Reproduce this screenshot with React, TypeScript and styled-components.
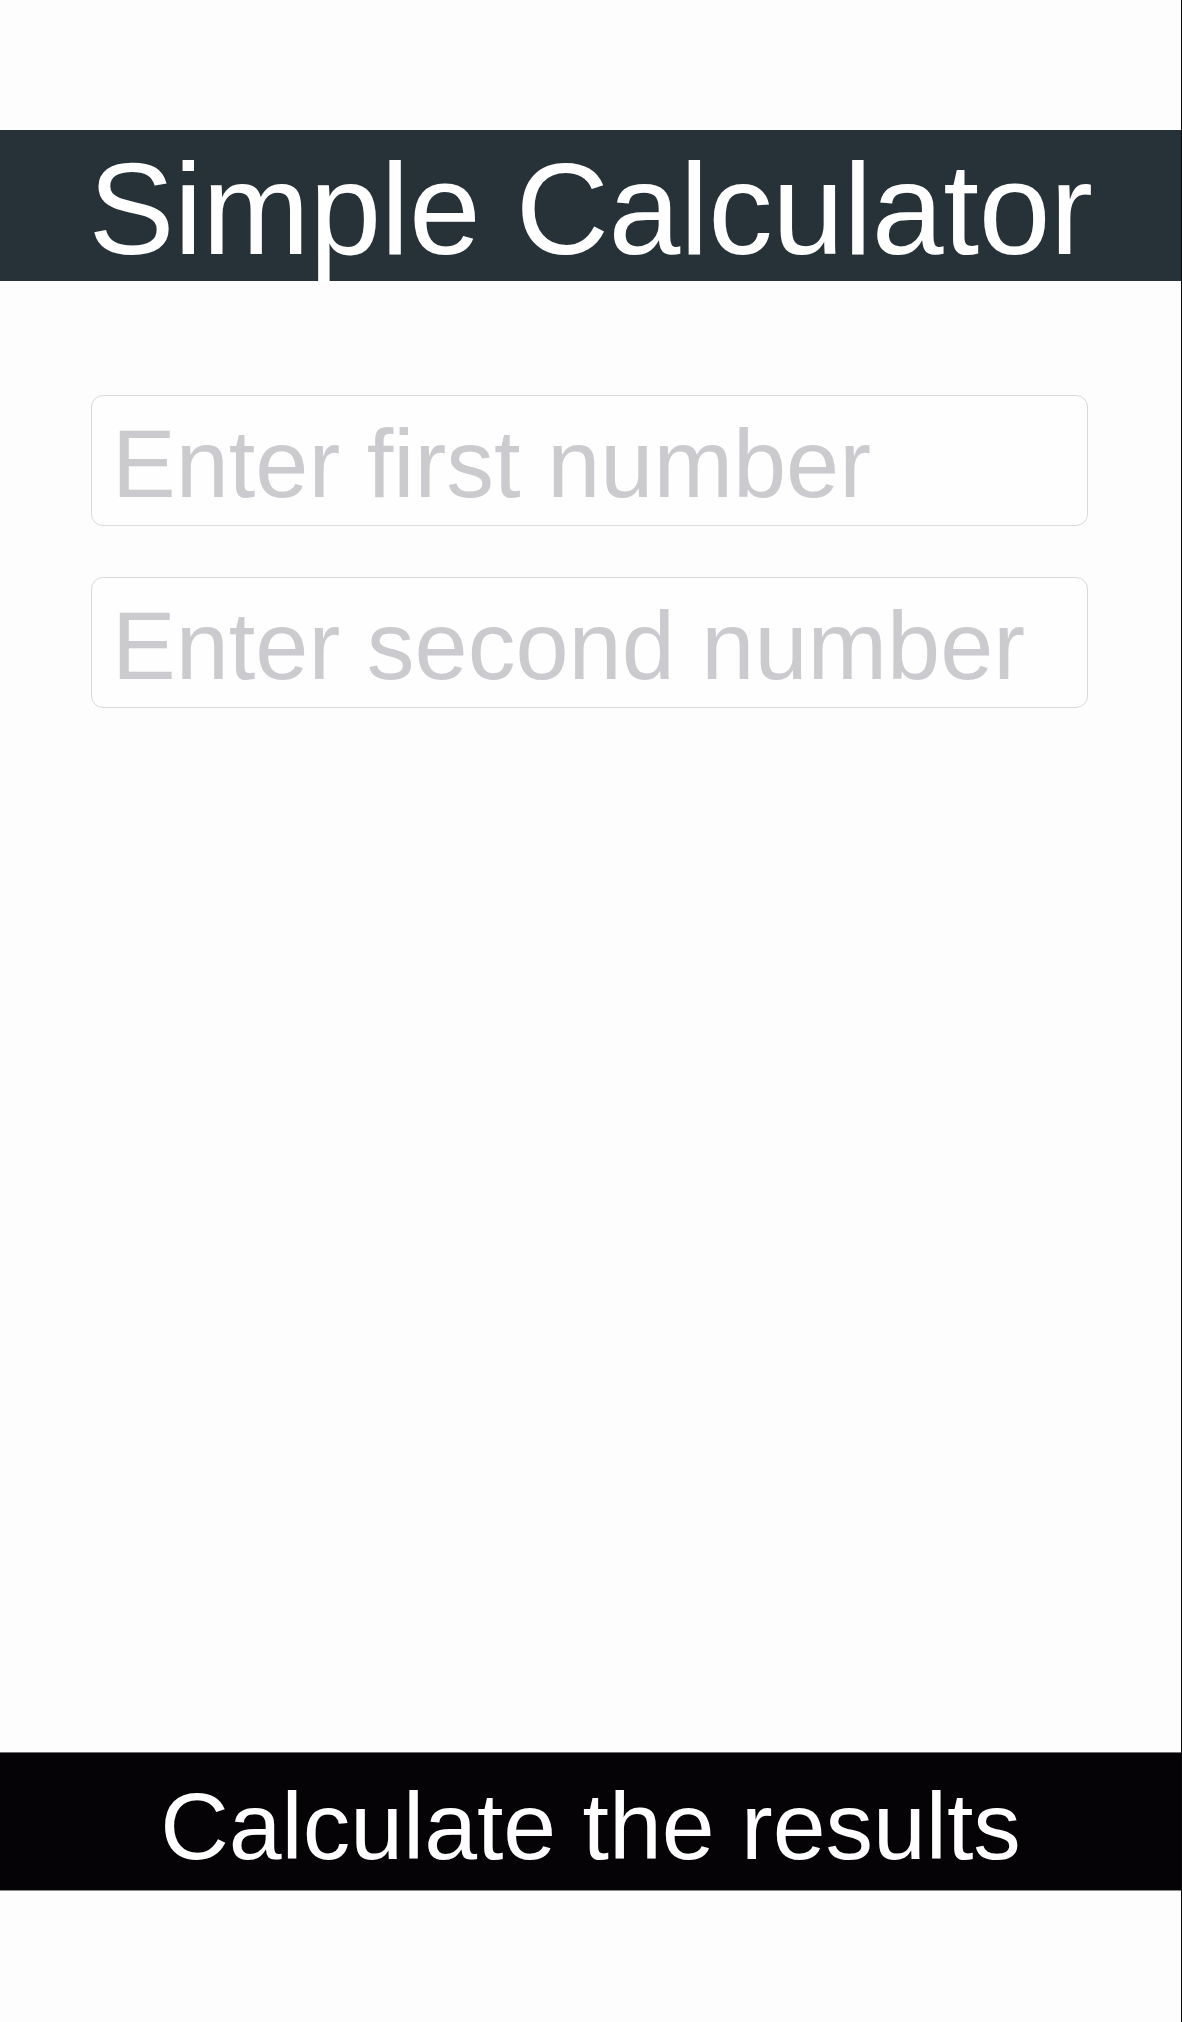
import React from "react";
import styled, { createGlobalStyle } from "styled-components";

const GlobalStyle = createGlobalStyle`
  html, body {
    margin: 0;
    padding: 0;
    background: #fdfdfd;
  }
  * { box-sizing: border-box; }
`;

const Page = styled.div`
  width: 1182px;
  min-height: 2022px;
  display: flex;
  flex-direction: column;
  background: #fdfdfd;
  border-right: 1px solid #0a0a0a;
  padding-top: 130px;
  padding-bottom: 131px;
  font-family: "Liberation Sans", Arial, Helvetica, sans-serif;
`;

const Header = styled.header`
  height: 151px;
  background: #263238;
  display: flex;
  align-items: center;
  justify-content: center;
  padding-top: 7px;
`;

const Title = styled.h1`
  margin: 0;
  font-size: 129px;
  font-weight: 400;
  color: #ffffff;
  letter-spacing: -0.4px;
  line-height: 1.117;
`;

const Form = styled.div`
  flex: 1;
  display: flex;
  flex-direction: column;
  gap: 51px;
  padding: 114px 93px 0 91px;
`;

const NumberInput = styled.input`
  width: 100%;
  height: 131px;
  border: 1.5px solid #d9d8dc;
  border-radius: 12px;
  background: #fefefe;
  padding: 7px 18px 0 20px;
  font-family: "Liberation Sans", Arial, Helvetica, sans-serif;
  font-size: 95.5px;
  color: #222;
  outline: none;
  &::placeholder {
    color: #cbcacf;
  }
`;

const CalcButton = styled.button`
  height: 139px;
  width: 100%;
  border: none;
  background: #050305;
  color: #ffffff;
  font-family: "Liberation Sans", Arial, Helvetica, sans-serif;
  font-size: 95px;
  font-weight: 400;
  padding: 9px 0 0;
  cursor: pointer;
  display: flex;
  align-items: center;
  justify-content: center;
  border-top: 1px solid #6f6f6f;
  border-bottom: 1px solid #8a8a8a;
`;

export default function App() {
  return (
    <>
      <GlobalStyle />
      <Page>
        <Header>
          <Title>Simple Calculator</Title>
        </Header>
        <Form>
          <NumberInput type="text" placeholder="Enter first number" />
          <NumberInput type="text" placeholder="Enter second number" />
        </Form>
        <CalcButton>Calculate the results</CalcButton>
      </Page>
    </>
  );
}
